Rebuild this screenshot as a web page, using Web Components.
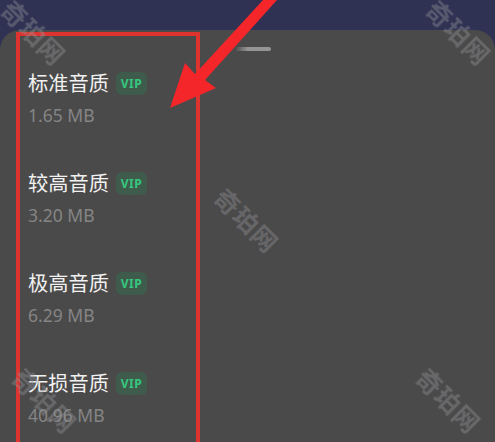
<!DOCTYPE html>
<html lang="zh">
<head>
<meta charset="utf-8">
<title>音质</title>
<style>
  html, body { margin: 0; height: 100%; overflow: hidden; background: #2f3253; }
</style>
</head>
<body>
<quality-sheet>
  <quality-row name="标准音质" size="1.65 MB"></quality-row>
  <quality-row name="较高音质" size="3.20 MB"></quality-row>
  <quality-row name="极高音质" size="6.29 MB"></quality-row>
  <quality-row name="无损音质" size="40.96 MB"></quality-row>
</quality-sheet>
<script>
const rowTemplate = document.createElement('template');
rowTemplate.innerHTML = `
  <style>
    :host {
      display: block;
      height: 100px;
      font-family: "Noto Sans CJK SC", "Noto Sans", sans-serif;
    }
    .top {
      display: flex;
      align-items: center;
      gap: 7px;
      height: 26px;
    }
    .name {
      color: #f1f1f1;
      font-size: 20.25px;
      line-height: 26px;
    }
    .vip {
      width: 31px;
      height: 23px;
      display: flex;
      align-items: center;
      justify-content: center;
      border-radius: 6px;
      background: #3f5b4c;
      color: #36c77f;
      font: bold 12px "Noto Sans", sans-serif;
      letter-spacing: 0.5px;
    }
    .size {
      margin-top: 9px;
      color: #858585;
      font: 17.5px/20px "Noto Sans", sans-serif;
    }
  </style>
  <div class="top"><span class="name"></span><span class="vip">VIP</span></div>
  <div class="size"></div>
`;

class QualityRow extends HTMLElement {
  constructor() {
    super();
    this._shadowRoot = this.attachShadow({ mode: 'open' });
    this._shadowRoot.appendChild(rowTemplate.content.cloneNode(true));
  }

  connectedCallback() {
    this._shadowRoot.querySelector('.name').textContent = this.getAttribute('name');
    this._shadowRoot.querySelector('.size').textContent = this.getAttribute('size');
  }
}

const sheetTemplate = document.createElement('template');
sheetTemplate.innerHTML = `
  <style>
    :host {
      display: block;
      position: relative;
      width: 495px;
      height: 442px;
      overflow: hidden;
      filter: blur(0.6px);
    }
    .sheet {
      box-sizing: border-box;
      height: 412px;
      margin-top: 30px;
      padding: 40px 0 0 28px;
      background: #4a4a4a;
      border-radius: 20px 20px 0 0;
    }
    .handle {
      position: absolute;
      left: 235px;
      top: 47px;
      width: 36px;
      height: 4px;
      border-radius: 2px;
      background: linear-gradient(to right, #4a4a4a, #959595 35%);
    }
    .frame {
      position: absolute;
      left: 16px;
      top: 32px;
      width: 176px;
      height: 420px;
      border: 4px solid #dd3430;
    }
    .arrow { position: absolute; left: 0; top: 0; }
    .mark {
      position: absolute;
      transform: translate(-50%, -50%) rotate(45deg);
      font: bold 25px/1 "Noto Sans CJK SC", sans-serif;
      letter-spacing: 1px;
      white-space: nowrap;
      color: rgba(145, 145, 150, 0.42);
    }
  </style>
  <div class="sheet"><slot></slot></div>
  <div class="handle"></div>
  <div class="frame"></div>
  <svg class="arrow" width="495" height="442" viewBox="0 0 495 442">
    <path d="M277 0 L205 80 L216 88 L170 108 L185 63 L195 74 L263 0 Z" fill="#f5262a"/>
  </svg>
  <span class="mark" style="left:34px;top:32px">奇珀网</span>
  <span class="mark" style="left:459px;top:32px">奇珀网</span>
  <span class="mark" style="left:247px;top:220px">奇珀网</span>
  <span class="mark" style="left:45px;top:400px">奇珀网</span>
  <span class="mark" style="left:449px;top:400px">奇珀网</span>
`;

class QualitySheet extends HTMLElement {
  constructor() {
    super();
    this._shadowRoot = this.attachShadow({ mode: 'open' });
    this._shadowRoot.appendChild(sheetTemplate.content.cloneNode(true));
  }
}

customElements.define('quality-row', QualityRow);
customElements.define('quality-sheet', QualitySheet);
</script>
</body>
</html>
